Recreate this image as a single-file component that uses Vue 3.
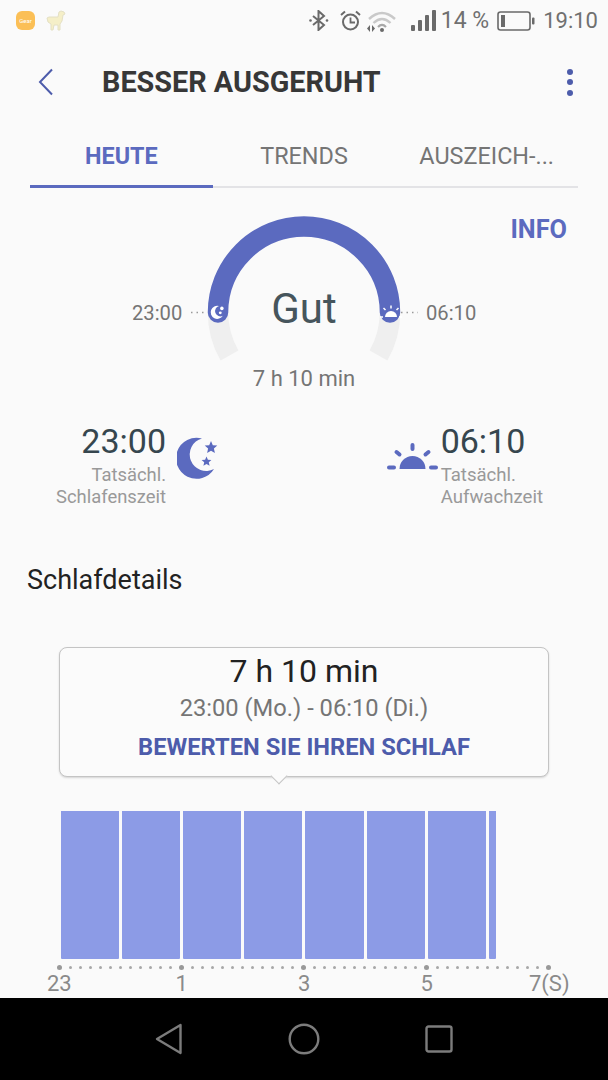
<script setup>
const tabs = [
  { label: 'HEUTE', active: true },
  { label: 'TRENDS', active: false },
  { label: 'AUSZEICH-...', active: false }
]
const bars = [58, 58, 58, 58, 59, 58, 58, 7]
const ticks = Array.from({ length: 49 }, (_, i) => i)
const axis = ['23', '1', '3', '5', '7(S)']
</script>

<template>
  <div class="page">
    <div class="status">
      <div class="gear"><span>Gear</span></div>
      <svg class="llama" width="20" height="21" viewBox="0 0 20 21">
        <path d="M15 1l3 1 1 2-2 1-1 6-2 3v6h-2v-5l-4 0-1 5H5v-6L2 12 1 8l2-1 4 0 5 0 1-5z" fill="#f5efc8" stroke="#e4e0c4" stroke-width="1"/>
      </svg>
      <svg class="bt" width="20" height="21" viewBox="0 0 20 21">
        <path d="M4 6l11 9-5.500 5V1L15 6 4 15" fill="none" stroke="#6a6a6a" stroke-width="2"/>
        <circle cx="1.500" cy="10.500" r="1.300" fill="#6a6a6a"/><circle cx="18" cy="10.500" r="1.300" fill="#6a6a6a"/>
      </svg>
      <svg class="alarm" width="21" height="21" viewBox="0 0 21 21">
        <circle cx="10.500" cy="12" r="7.500" fill="none" stroke="#6a6a6a" stroke-width="2"/>
        <path d="M10.500 7.500V12.500H15" fill="none" stroke="#6a6a6a" stroke-width="1.800"/>
        <path d="M1 5l4-3.500M20 5l-4-3.500" stroke="#6a6a6a" stroke-width="2"/>
      </svg>
      <svg class="wifi" width="30" height="22" viewBox="0 0 30 22">
        <path d="M2 9Q15-3 28 9" fill="none" stroke="#c9c9c9" stroke-width="2.400"/>
        <path d="M6.500 13Q15 5 23.500 13" fill="none" stroke="#c9c9c9" stroke-width="2.400"/>
        <path d="M11 17Q15 13 19 17" fill="none" stroke="#a8a8a8" stroke-width="2.200"/>
        <circle cx="15" cy="20" r="2" fill="#6a6a6a"/>
        <path d="M3 15l-3 3.500 3 3.500zM5 15l3 3.500-3 3.500z" fill="#6a6a6a"/>
      </svg>
      <svg class="signal" width="25" height="21" viewBox="0 0 25 21">
        <rect x="0" y="15" width="4" height="6" rx="1" fill="#6a6a6a"/>
        <rect x="7" y="10" width="4" height="11" rx="1" fill="#6a6a6a"/>
        <rect x="14" y="5" width="4" height="16" rx="1" fill="#6a6a6a"/>
        <rect x="21" y="0" width="4" height="21" rx="1" fill="#6a6a6a"/>
      </svg>
      <span class="pct">14 %</span>
      <svg class="battery" width="38" height="20" viewBox="0 0 38 20">
        <rect x="1" y="1" width="32" height="18" rx="2.500" fill="none" stroke="#6a6a6a" stroke-width="1.600"/>
        <rect x="4" y="4" width="4" height="12" fill="#6a6a6a"/>
        <rect x="35" y="6.500" width="2.500" height="7" rx="1" fill="#6a6a6a"/>
      </svg>
      <span class="clock">19:10</span>
    </div>

    <div class="toolbar">
      <svg class="back" width="16" height="28" viewBox="0 0 16 28">
        <path d="M14 1.500L2 14l12 12.500" fill="none" stroke="#4d5cab" stroke-width="2"/>
      </svg>
      <h1 class="title">BESSER AUSGERUHT</h1>
      <div class="more"><i></i><i></i><i></i></div>
    </div>

    <div class="tabs">
      <div v-for="t in tabs" :key="t.label" class="tab" :class="{ active: t.active }">{{ t.label }}</div>
    </div>

    <div class="gauge">
      <span class="info">INFO</span>
      <svg class="arc" width="608" height="215" viewBox="0 0 608 215">
        <path d="M229.500 167.500A86 86 0 0 1 218 124.500" fill="none" stroke="#efefef" stroke-width="20.500"/>
        <path d="M378.500 167.500A86 86 0 0 0 390 124.500" fill="none" stroke="#efefef" stroke-width="20.500"/>
        <path d="M218 124.500A86 86 0 0 1 390 124.500" fill="none" stroke="#5b6abf" stroke-width="20.500" stroke-linecap="round"/>
        <path d="M191 124.500H207M401 124.500H418" stroke="#9a9a9a" stroke-width="1.500" stroke-dasharray="1.500 4"/>
        <g transform="translate(211 117.500) scale(.32)" fill="#fff">
          <path d="M25 1.500A20.500 20.500 0 1 0 37 32A16.500 16.500 0 1 1 25 1.500z"/>
          <circle cx="34" cy="9" r="5.500"/>
          <circle cx="29" cy="23" r="4.500"/>
        </g>
        <path d="M385 129a6 6 0 0 1 12 0z" fill="#fff"/>
        <path d="M391 117.500v3M383.500 120l2 2M398.500 120l-2 2M380 129h3M399 129h3" stroke="#fff" stroke-width="1.500"/>
      </svg>
      <span class="side left">23:00</span>
      <span class="side right">06:10</span>
      <span class="gut">Gut</span>
      <span class="total">7 h 10 min</span>
    </div>

    <div class="summary">
      <div class="block">
        <div class="texts end">
          <div class="big">23:00</div>
          <div class="sub">Tatsächl.<br>Schlafenszeit</div>
        </div>
        <svg class="moon" width="41" height="44" viewBox="0 0 41 44">
          <path d="M25 1.500A20.500 20.500 0 1 0 37 32A16.500 16.500 0 1 1 25 1.500z" fill="#5b6abf"/>
          <path d="M34 4l1.800 4.200 4.500.4-3.400 3 1 4.400-3.900-2.300-3.900 2.300 1-4.400-3.400-3 4.500-.4z" fill="#5b6abf"/>
          <path d="M29.500 19.500l1.400 3.200 3.500.3-2.600 2.300.8 3.400-3.100-1.800-3.100 1.800.8-3.400-2.600-2.300 3.500-.3z" fill="#5b6abf"/>
        </svg>
      </div>
      <div class="block wake">
        <svg class="sun" width="51" height="28" viewBox="0 0 51 28">
          <path d="M12.500 27a13 13 0 0 1 26 0z" fill="#5b6abf" />
          <path d="M25.500 3v4M9.500 10l3 2.500M41.500 10l-3 2.500M2 25.500h5M44 25.500h5" stroke="#5b6abf" stroke-width="4" stroke-linecap="round" fill="none"/>
        </svg>
        <div class="texts">
          <div class="big">06:10</div>
          <div class="sub">Tatsächl.<br>Aufwachzeit</div>
        </div>
      </div>
    </div>

    <h2 class="details">Schlafdetails</h2>

    <div class="tip">
      <div class="tip-main">7 h 10 min</div>
      <div class="tip-range">23:00 (Mo.) - 06:10 (Di.)</div>
      <div class="tip-action">BEWERTEN SIE IHREN SCHLAF</div>
      <span class="tip-arrow"></span>
    </div>

    <div class="bars">
      <div v-for="(w, i) in bars" :key="i" class="bar" :style="{ width: w + 'px' }"></div>
    </div>

    <div class="ticks">
      <i v-for="t in ticks" :key="t" :class="{ major: t % 12 === 0 }"></i>
    </div>
    <div class="axis">
      <span v-for="a in axis" :key="a">{{ a }}</span>
    </div>

    <div class="nav">
      <svg width="28" height="32" viewBox="0 0 28 32">
        <path d="M25.500 2L2 16l23.500 14z" fill="none" stroke="#7c7c7c" stroke-width="2.400" stroke-linejoin="round"/>
      </svg>
      <svg width="32" height="32" viewBox="0 0 32 32">
        <circle cx="16" cy="16" r="14.300" fill="none" stroke="#7c7c7c" stroke-width="2.400"/>
      </svg>
      <svg width="28" height="28" viewBox="0 0 28 28">
        <rect x="1.500" y="1.500" width="25" height="25" rx="2" fill="none" stroke="#7c7c7c" stroke-width="2.400"/>
      </svg>
    </div>
  </div>
</template>

<style scoped>
.page {
  width: 608px;
  height: 1080px;
  background: #fafafa;
  font-family: Roboto, "Liberation Sans", sans-serif;
  display: flex;
  flex-direction: column;
  overflow: hidden;
}
.status {
  height: 40px;
  display: flex;
  align-items: center;
  padding: 1px 10px 0 16px;
  box-sizing: border-box;
  color: #707070;
  flex: none;
}
.gear {
  width: 19px;
  height: 19px;
  border-radius: 6px;
  background: #fbbf56;
  color: #fff;
  font-size: 6px;
  display: flex;
  align-items: center;
  justify-content: center;
  margin-right: 11px;
}
.llama { margin-right: auto; }
.alarm { margin-left: 11px; }
.wifi { margin-left: 6px; }
.signal { margin-left: 14px; }
.pct { font-size: 23px; margin-left: 5px; }
.battery { margin-left: 8px; }
.clock { font-size: 22px; margin-left: 8px; }
.toolbar {
  height: 84px;
  flex: none;
  display: flex;
  align-items: center;
  padding: 0 35px 0 38px;
}
.title {
  margin: 0 0 0 48px;
  font-size: 28.800px;
  font-weight: 700;
  color: #373737;
  flex: 1;
}
.more { display: flex; flex-direction: column; gap: 4.500px; }
.more i { width: 6px; height: 6px; border-radius: 50%; background: #4d5cab; }
.tabs {
  height: 64px;
  margin: 0 30px;
  display: flex;
  border-bottom: 2px solid #e3e3e6;
  flex: none;
  box-sizing: border-box;
}
.tab {
  flex: 1;
  text-align: center;
  font-size: 23.400px;
  line-height: 65px;
  color: #757575;
  height: 64px;
  box-sizing: border-box;
}
.tab.active {
  color: #5b6abf;
  font-weight: 700;
  border-bottom: 3px solid #5b6abf;
}
.gauge {
  height: 215px;
  position: relative;
  flex: none;
}
.arc { position: absolute; left: 0; top: 0; }
.info {
  position: absolute;
  right: 41px;
  top: 27px;
  font-size: 25.300px;
  font-weight: 700;
  color: #5b6abf;
}
.side {
  position: absolute;
  top: 113px;
  font-size: 20.200px;
  color: #757575;
}
.side.left { left: 132px; }
.side.right { left: 426px; }
.gut {
  position: absolute;
  left: 0;
  right: 0;
  top: 96px;
  text-align: center;
  font-size: 42px;
  color: #46555c;
}
.total {
  position: absolute;
  left: 0;
  right: 0;
  top: 178px;
  text-align: center;
  font-size: 22px;
  color: #757575;
}
.summary {
  height: 115px;
  display: flex;
  justify-content: space-between;
  padding: 17px 65px 0 0;
  flex: none;
  box-sizing: border-box;
}
.block { display: flex; width: 218px; justify-content: flex-end; gap: 11px; }
.block.wake { width: auto; gap: 3px; }
.texts.end { text-align: right; }
.big { font-size: 34px; color: #36464e; line-height: 42px; }
.sub { font-size: 18.400px; line-height: 22px; color: #999; margin-top: 2px; }
.wake .sub { font-size: 18.600px; }
.moon { margin-top: 17px; }
.sun { margin-top: 22px; }
.details {
  margin: 47px 0 0 27px;
  font-size: 27px;
  font-weight: 400;
  line-height: 30px;
  color: #222;
  flex: none;
}
.tip {
  margin: 52px 0 0 59px;
  width: 490px;
  height: 130px;
  box-sizing: border-box;
  border: 1px solid #c4c4c4;
  border-radius: 8px;
  background: #fbfbfb;
  box-shadow: 0 1px 2px rgba(0,0,0,.15);
  text-align: center;
  position: relative;
  flex: none;
}
.tip-main { font-size: 32px; color: #222; line-height: 38px; margin-top: 4px; }
.tip-range { font-size: 23.700px; color: #757575; line-height: 30px; margin-top: 3px; }
.tip-action { font-size: 23.700px; font-weight: 700; color: #4d5cab; line-height: 30px; margin-top: 9px; }
.tip-arrow {
  position: absolute;
  left: 213px;
  bottom: -6px;
  width: 11px;
  height: 11px;
  background: #fbfbfb;
  border-right: 1px solid #c4c4c4;
  border-bottom: 1px solid #c4c4c4;
  transform: rotate(45deg);
}
.bars {
  margin: 34px 0 0 61px;
  height: 148px;
  display: flex;
  gap: 3px;
  flex: none;
}
.bar { background: #8c9be6; border-radius: 0 0 1px 1px; }
.ticks {
  margin: 5px 0 0 57px;
  width: 494px;
  height: 6px;
  display: flex;
  justify-content: space-between;
  align-items: center;
  flex: none;
}
.ticks i { width: 3px; height: 3px; border-radius: 50%; background: #a8a8a8; }
.ticks i.major { width: 5px; height: 5px; background: #999; }
.axis {
  display: grid;
  grid-template-columns: repeat(5, 122.500px);
  margin-left: -2px;
  height: 28px;
  font-size: 22px;
  line-height: 28px;
  text-align: center;
  color: #8a8a8a;
  flex: none;
  overflow: hidden;
}
.nav {
  flex: none;
  height: 82px;
  background: #000;
  display: flex;
  align-items: center;
  justify-content: center;
  gap: 105px;
}
</style>
